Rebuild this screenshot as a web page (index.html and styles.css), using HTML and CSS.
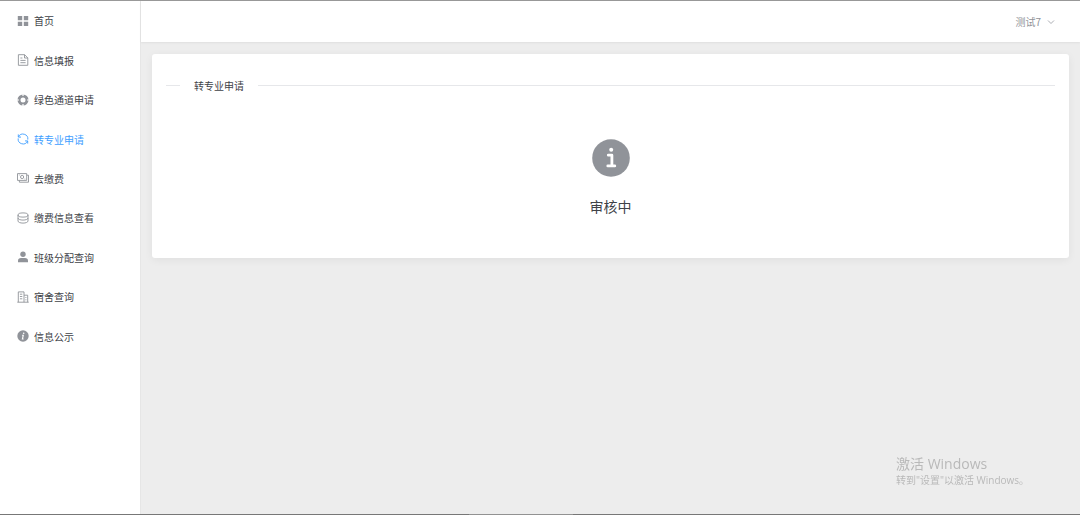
FILE: index.html
```html
<!DOCTYPE html>
<html lang="zh-CN">
<head>
    <meta charset="UTF-8">
    <meta name="viewport" content="width=device-width, initial-scale=1.0">
    <title>转专业申请</title>
    <link rel="stylesheet" href="styles.css">
</head>
<body>
    <div class="app">
        <nav class="sidebar">
            <a class="menu-item" href="#">
                <svg class="icon solid" viewBox="0 0 12 12"><path d="M.8 1h4.400v4.200H.8zM6.800 1h4.400v4.200H6.800zM.8 6.800h4.400V11H.8zM6.800 6.800h4.400V11H6.800z"/></svg>
                <span>首页</span>
            </a>
            <a class="menu-item" href="#">
                <svg class="icon" viewBox="0 0 12 12"><path d="M1.4.7h6.2l3.2 3.2v7.4H1.4zM7.5.7v3.3h3.3M3.4 4h2M3.4 6.4h5.2M3.4 8.7h5.2"/></svg>
                <span>信息填报</span>
            </a>
            <a class="menu-item" href="#">
                <svg class="icon" viewBox="0 0 12 12"><circle class="ring" cx="6" cy="6" r="4"/><path class="notch" d="M6 0v2M6 10v2M0 6h2M10 6h2"/></svg>
                <span>绿色通道申请</span>
            </a>
            <a class="menu-item active" href="#">
                <svg class="icon" viewBox="0 0 12 12"><path d="M1.500 3.900A4.900 4.900 0 0 1 10.800 6.600M10.500 8.100A4.900 4.900 0 0 1 1.200 5.400M1.300 1.400v2.700h2.700M10.700 10.600V7.900H8"/></svg>
                <span>转专业申请</span>
            </a>
            <a class="menu-item" href="#">
                <svg class="icon" viewBox="0 0 12 12"><path d="M.5 1.6h9.2v6.8H.5zM9.8 3.2h1.7v7H2.4V8.5M1.9 3h.7M7.6 7h.7"/><circle cx="5.1" cy="5" r="1.6"/></svg>
                <span>去缴费</span>
            </a>
            <a class="menu-item" href="#">
                <svg class="icon" viewBox="0 0 12 12"><ellipse cx="6" cy="3" rx="5" ry="2.1"/><path d="M1 3v6c0 1.2 2.2 2.1 5 2.1s5-.9 5-2.1V3M1 6c0 1.2 2.2 2.1 5 2.1S11 7.2 11 6"/></svg>
                <span>缴费信息查看</span>
            </a>
            <a class="menu-item" href="#">
                <svg class="icon solid" viewBox="0 0 12 12"><circle cx="6" cy="3.2" r="2.7"/><path d="M1 11.3V9.8C1 8 2.2 7 4 7h4c1.8 0 3 1 3 2.8v1.5z"/></svg>
                <span>班级分配查询</span>
            </a>
            <a class="menu-item" href="#">
                <svg class="icon" viewBox="0 0 12 12"><path d="M1.3 11.2V.9H7v10.300M7 4.200h3.700v7M.3 11.200h11.400M2.900 3.200h2.400M2.900 5.500h2.400M2.900 7.800h2.400M8.900 6v1M8.900 8.300v1"/></svg>
                <span>宿舍查询</span>
            </a>
            <a class="menu-item" href="#">
                <svg class="icon solid" viewBox="0 0 12 12"><circle cx="6" cy="6" r="5.7"/><circle class="cut" cx="6.7" cy="3.2" r=".8"/><path class="stem" d="M5.100 5.200h1.200L5.400 9h1.200"/></svg>
                <span>信息公示</span>
            </a>
        </nav>
        <div class="page">
            <header class="header">
                <button class="user" type="button">
                    <span>测试7</span>
                    <svg class="arrow" viewBox="0 0 8 8"><path d="M1 2.500l3 3 3-3"/></svg>
                </button>
            </header>
            <main class="main">
                <section class="card">
                    <h2 class="divider">转专业申请</h2>
                    <div class="result">
                        <svg class="result-icon" viewBox="0 0 38 38"><circle class="disc" cx="19" cy="19" r="18.8"/><circle class="mark" cx="19.2" cy="10.8" r="2"/><path class="line" d="M16.300 16.200h3.600v10.500M15.800 26.900h7"/></svg>
                        <p class="result-title">审核中</p>
                    </div>
                </section>
            </main>
        </div>
    </div>
    <div class="watermark">
        <p class="watermark-title">激活 Windows</p>
        <p class="watermark-text">转到"设置"以激活 Windows。</p>
    </div>
    <div class="taskbar"></div>
</body>
</html>
```
FILE: styles.css
```css
* {
    box-sizing: border-box;
}
body {
    margin: 0;
    font-family: "Noto Sans CJK SC", sans-serif;
    font-size: 10px;
    color: #404247;
    background: #ededed;
}
h2, p {
    margin: 0;
    font-weight: 400;
}
.app {
    display: flex;
    min-height: 100vh;
    border-top: 1px solid #999;
}
/* nine equal rows, the rest of the column stays empty */
.sidebar {
    display: grid;
    grid-template-rows: repeat(9, calc(355px / 9));
    align-content: start;
    flex: none;
    width: 141px;
    background: #fff;
    border-right: 1px solid #e6e6e6;
}
.menu-item {
    display: flex;
    align-items: center;
    gap: 5px;
    padding-left: 17px;
    color: #404247;
    text-decoration: none;
}
.icon {
    width: 12px;
    height: 12px;
    fill: none;
    stroke: #909399;
    stroke-width: 0.9;
}
.icon.solid {
    fill: #909399;
    stroke: none;
}
.icon .ring {
    stroke-width: 3;
}
.icon .notch {
    stroke: #fff;
    stroke-width: 1.2;
}
.icon .cut {
    fill: #fff;
}
.icon .stem {
    fill: none;
    stroke: #fff;
    stroke-width: 1.1;
}
.menu-item.active {
    color: #409eff;
}
.active .icon {
    stroke: #409eff;
}
.page {
    flex: 1;
    min-width: 0;
}
.header {
    display: flex;
    align-items: center;
    justify-content: flex-end;
    height: 41px;
    padding-right: 25px;
    background: #fff;
    box-shadow: 0 1px 2px rgba(0, 0, 0, 0.06);
}
.user {
    display: flex;
    align-items: center;
    gap: 6px;
    padding: 0;
    border: 0;
    background: none;
    color: #909399;
    font: inherit;
    cursor: pointer;
}
.arrow {
    width: 8px;
    height: 8px;
    fill: none;
    stroke: #a0a3aa;
    stroke-width: 0.9;
}
.main {
    padding: 12px 11px;
}
.card {
    padding: 24px 14px 41px;
    background: #fff;
    border-radius: 3px;
    box-shadow: 0 2px 8px rgba(0, 0, 0, 0.06);
}
.divider {
    display: flex;
    align-items: center;
    gap: 14px;
    font-size: 10px;
    line-height: 15px;
}
.divider::before,
.divider::after {
    content: "";
    height: 1px;
    background: #e6e7ea;
}
.divider::before {
    width: 14px;
}
.divider::after {
    flex: 1;
}
.result {
    display: flex;
    flex-direction: column;
    align-items: center;
    gap: 18px;
    padding-top: 46px;
}
.result-icon {
    width: 38px;
    height: 38px;
}
.disc {
    fill: #909399;
}
.mark {
    fill: #fff;
}
.line {
    fill: none;
    stroke: #fff;
    stroke-width: 2.8;
    stroke-linecap: round;
    stroke-linejoin: round;
}
.result-title {
    font-size: 14px;
    line-height: 22px;
}
.watermark {
    position: fixed;
    right: 49px;
    bottom: 27px;
    width: 135px;
    color: #b9b9b9;
    font-family: "Open Sans", "Noto Sans CJK SC", sans-serif;
    white-space: nowrap;
}
.watermark-title {
    font-size: 14px;
    line-height: 18px;
}
.watermark-text {
    font-size: 10px;
    line-height: 15px;
}
.taskbar {
    position: fixed;
    left: 0;
    right: 0;
    bottom: 0;
    height: 1px;
    background: linear-gradient(90deg, #777 43.4%, #929292 43.4%, #929292 53.1%, #777 53.1%);
}
```
